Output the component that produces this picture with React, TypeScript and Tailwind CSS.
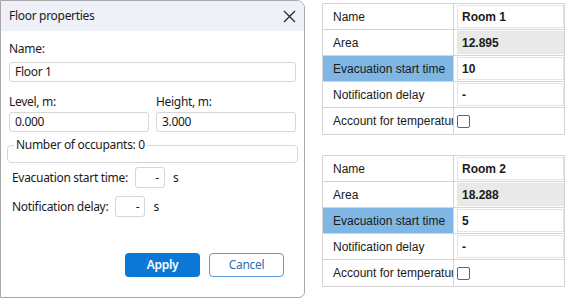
import React from "react";

const dlgFont = { fontFamily: '"Noto Sans", "Open Sans", sans-serif', letterSpacing: "-0.3px" };
const tblFont = { fontFamily: '"Liberation Sans", Arial, sans-serif' };

function PropTable({ name, area, evac }: { name: string; area: string; evac: string }) {
  const rows = [
    { label: "Name", value: name, kind: "box" },
    { label: "Area", value: area, kind: "gray" },
    { label: "Evacuation start time", value: evac, kind: "sel" },
    { label: "Notification delay", value: "-", kind: "box" },
    { label: "Account for temperature", value: "", kind: "check" },
  ];
  return (
    <div className="w-[243px] border border-[#d4d4d4] text-[12px] text-[#1a1a1a]" style={tblFont}>
      {rows.map((r, i) => (
        <div
          key={i}
          className={`flex h-[26px] ${i < rows.length - 1 ? "border-b border-[#d4d4d4]" : ""}`}
        >
          <div
            className={`w-[131px] shrink-0 border-r border-[#d4d4d4] pl-[10px] flex items-center overflow-hidden whitespace-nowrap ${
              r.kind === "sel" ? "bg-[#7fb6e4]" : ""
            }`}
          >
            {r.label}
          </div>
          <div className="flex-1 flex items-center pl-[3px] py-[1px]">
            {r.kind === "check" ? (
              <div className="w-[13px] h-[13px] border border-[#1b74d0] rounded-[2px] bg-white" />
            ) : (
              <div
                className={`h-full w-full flex items-center pl-[4px] font-bold border border-[#e4e4e4] ${
                  r.kind === "gray" ? "bg-[#e9e9e9]" : "bg-white"
                }`}
              >
                {r.value}
              </div>
            )}
          </div>
        </div>
      ))}
    </div>
  );
}

export default function App() {
  return (
    <div className="w-[566px] h-[299px] bg-white flex overflow-hidden">
      {/* Dialog */}
      <div
        className="w-[305px] h-[298px] shrink-0 flex flex-col border border-[#a8a8a8] rounded-tr-[8px] rounded-br-[6px] bg-white overflow-hidden text-[12px] text-[#1a1a1a]"
        style={dlgFont}
      >
        <div className="h-[30px] bg-[#eef1f7] flex items-center justify-between pl-[8px] pr-[7px] shrink-0">
          <span className="text-[12px] leading-none">Floor properties</span>
          <svg width="13" height="13" viewBox="0 0 13 13" className="mr-[1px]">
            <path d="M1 1 L12 12 M12 1 L1 12" stroke="#222" strokeWidth="1.2" />
          </svg>
        </div>
        <div className="flex flex-col px-[8px]">
          <div className="mt-[9px] h-[18px] leading-[18px]">Name:</div>
          <div className="mt-[4px] h-[20px] border border-[#d6d6d6] rounded-[3px] flex items-center pl-[5px]">
            Floor 1
          </div>
          <div className="mt-[11px] flex gap-[7px]">
            <div className="flex-1 flex flex-col">
              <div className="h-[18px] leading-[18px]">Level, m:</div>
              <div className="mt-[1px] h-[20px] border border-[#d6d6d6] rounded-[3px] flex items-center pl-[5px]">
                0.000
              </div>
            </div>
            <div className="flex-1 flex flex-col">
              <div className="h-[18px] leading-[18px]">Height, m:</div>
              <div className="mt-[1px] h-[20px] border border-[#d6d6d6] rounded-[3px] flex items-center pl-[5px]">
                3.000
              </div>
            </div>
          </div>
          <div className="relative mt-[13px] -mx-[2px] h-[18px] border border-[#d6d6d6] rounded-[4px]">
            <span className="absolute left-[6px] -top-[10px] bg-white px-[2px] leading-[18px]">
              Number of occupants: 0
            </span>
          </div>
          <div className="mt-[4px] flex items-center pl-[3px] h-[21px]">
            <span>Evacuation start time:</span>
            <div className="ml-[7px] w-[30px] h-[21px] border border-[#d6d6d6] rounded-[3px] flex items-center justify-end pr-[5px]">
              -
            </div>
            <span className="ml-[8px]">s</span>
          </div>
          <div className="mt-[8px] flex items-center pl-[3px] h-[21px]">
            <span>Notification delay:</span>
            <div className="ml-[7px] w-[30px] h-[21px] border border-[#d6d6d6] rounded-[3px] flex items-center justify-end pr-[5px]">
              -
            </div>
            <span className="ml-[8px]">s</span>
          </div>
          <div className="mt-[36px] flex justify-end gap-[9px] pr-[12px]">
            <div className="w-[75px] h-[24px] rounded-[4px] bg-[#0b78d7] text-white font-semibold flex items-center justify-center">
              Apply
            </div>
            <div className="w-[75px] h-[24px] rounded-[4px] border border-[#5b9ae0] text-[#2f6cb3] flex items-center justify-center">
              Cancel
            </div>
          </div>
        </div>
      </div>
      {/* Tables */}
      <div className="flex flex-col pl-[17px] pt-[3px] gap-[20px]">
        <PropTable name="Room 1" area="12.895" evac="10" />
        <PropTable name="Room 2" area="18.288" evac="5" />
      </div>
    </div>
  );
}
